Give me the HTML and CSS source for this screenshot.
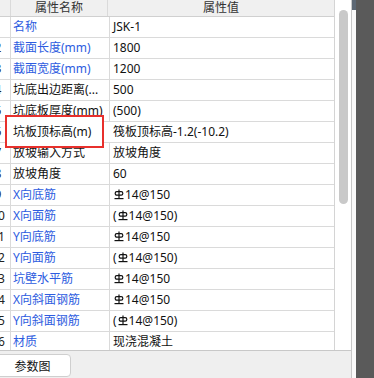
FILE: index.html
```html
<!DOCTYPE html>
<html lang="zh-CN">

<head>
    <meta charset="UTF-8">
    <title>属性</title>
    <link rel="stylesheet" href="styles.css">
</head>

<body>
    <div class="panel">
        <div class="grid-wrap">
            <div class="grid">
                <div class="row head">
                    <div class="idx"></div>
                    <div class="name">属性名称</div>
                    <div class="val">属性值</div>
                </div>
                <div class="row"><div class="idx"><span>1</span></div><div class="name blue">名称</div><div class="val">JSK-1</div></div>
                <div class="row"><div class="idx"><span>2</span></div><div class="name blue">截面长度(mm)</div><div class="val">1800</div></div>
                <div class="row"><div class="idx"><span>3</span></div><div class="name blue">截面宽度(mm)</div><div class="val">1200</div></div>
                <div class="row"><div class="idx"><span>4</span></div><div class="name">坑底出边距离(...</div><div class="val">500</div></div>
                <div class="row"><div class="idx"><span>5</span></div><div class="name">坑底板厚度(mm)</div><div class="val">(500)</div></div>
                <div class="row"><div class="idx"><span>6</span></div><div class="name marked">坑板顶标高(m)</div><div class="val">筏板顶标高-1.2(-10.2)</div></div>
                <div class="row"><div class="idx"><span>7</span></div><div class="name">放坡输入方式</div><div class="val">放坡角度</div></div>
                <div class="row"><div class="idx"><span>8</span></div><div class="name">放坡角度</div><div class="val">60</div></div>
                <div class="row"><div class="idx"><span>9</span></div><div class="name blue">X向底筋</div><div class="val"><i class="bar"></i>14@150</div></div>
                <div class="row"><div class="idx"><span>10</span></div><div class="name blue">X向面筋</div><div class="val">(<i class="bar"></i>14@150)</div></div>
                <div class="row"><div class="idx"><span>11</span></div><div class="name blue">Y向底筋</div><div class="val"><i class="bar"></i>14@150</div></div>
                <div class="row"><div class="idx"><span>12</span></div><div class="name blue">Y向面筋</div><div class="val">(<i class="bar"></i>14@150)</div></div>
                <div class="row"><div class="idx"><span>13</span></div><div class="name blue">坑壁水平筋</div><div class="val"><i class="bar"></i>14@150</div></div>
                <div class="row"><div class="idx"><span>14</span></div><div class="name blue">X向斜面钢筋</div><div class="val"><i class="bar"></i>14@150</div></div>
                <div class="row"><div class="idx"><span>15</span></div><div class="name blue">Y向斜面钢筋</div><div class="val">(<i class="bar"></i>14@150)</div></div>
                <div class="row"><div class="idx"><span>16</span></div><div class="name blue">材质</div><div class="val">现浇混凝土</div></div>
            </div>
            <div class="vscroll"><div class="thumb"></div></div>
            <div class="mark"></div>
        </div>
        <div class="tabs">
            <button class="tab">参数图</button>
        </div>
    </div>
    <div class="strip"></div>
    <div class="side"></div>

    <script>
        // rebar grade symbol drawn with plain strokes
        var svg = '<svg width="10" height="11" viewBox="0 0 10 11">' +
            '<line x1="5" y1="0.5" x2="5" y2="10" stroke="#111" stroke-width="1.2"/>' +
            '<rect x="1.2" y="2.6" width="7.6" height="3.6" rx="1.6" fill="none" stroke="#111" stroke-width="1.2"/>' +
            '<line x1="0.5" y1="9.6" x2="9.5" y2="9.6" stroke="#111" stroke-width="1.2"/>' +
            '</svg>';
        var bars = document.querySelectorAll(".bar");
        for (var i = 0; i < bars.length; i++) {
            bars[i].innerHTML = svg;
        }
    </script>
</body>

</html>
```

FILE: styles.css
```css
body {
    margin: 0;
    padding: 0;
    font-family: "Noto Sans", "Noto Sans CJK SC", sans-serif;
    font-size: 12px;
    color: #111;
    display: flex;
    width: 374px;
    height: 378px;
    overflow: hidden;
    background-color: #5a5a5a;
}

.panel {
    width: 351px;
    border-right: 1px solid #c8c8c8;
    background-color: #efefef;
    display: flex;
    flex-direction: column;
}

.grid-wrap {
    position: relative;
    display: flex;
    height: 350px;
    border-bottom: 1px solid #c8c8c8;
    background-color: #fff;
    overflow: hidden;
}

.grid {
    width: 334px;
    border-right: 1px solid #d4d4d4;
}

.row {
    display: flex;
    height: 20px;
    line-height: 20px;
    border-bottom: 1px solid #dadada;
}

.row.head {
    height: 16px;
    line-height: 15px;
    background-color: #f0f0f0;
    border-bottom-color: #d0d0d0;
    color: #333;
}

.idx {
    width: 10px;
    border-right: 1px solid #dadada;
    overflow: hidden;
    color: #222;
}

.idx span {
    display: block;
    width: 24px;
    margin-left: -14px;
    text-align: center;
}

.name {
    width: 96px;
    padding-left: 2px;
    border-right: 1px solid #dadada;
    white-space: nowrap;
    overflow: hidden;
}

.name.marked {
    position: relative;
    z-index: 2;
    overflow: visible;
    border-right-color: transparent;
}

.val {
    flex: 1;
    padding-left: 3px;
    white-space: nowrap;
}

.head .name,
.head .val {
    padding-left: 0;
    text-align: center;
}

.blue {
    color: #2d5ce0;
}

.bar {
    display: inline-block;
    width: 10px;
    height: 11px;
    margin: 0 1px 0 1px;
    vertical-align: -1px;
}

.bar svg {
    display: block;
}

.vscroll {
    flex: 1;
    padding: 10px 3px 0 4px;
}

.thumb {
    width: 9px;
    height: 194px;
    border-radius: 5px;
    background-color: #c9c9c9;
}

.mark {
    position: absolute;
    z-index: 1;
    left: 5px;
    top: 115px;
    width: 95px;
    height: 29px;
    border: 2px solid #e8302c;
    background-color: #fff;
}

.tabs {
    flex: 1;
    padding-top: 3px;
}

.tab {
    margin-left: -6px;
    width: 77px;
    height: 23px;
    padding: 0;
    font-family: "Noto Sans", "Noto Sans CJK SC", sans-serif;
    font-size: 12px;
    color: #111;
    background-color: #fff;
    border: 1px solid #cfcfcf;
    border-radius: 4px;
}

.strip {
    width: 4px;
    background-color: #fafafa;
    border-top: 10px solid #5d6874;
}

.side {
    flex: 1;
    background-color: #5a5a5a;
}
```
